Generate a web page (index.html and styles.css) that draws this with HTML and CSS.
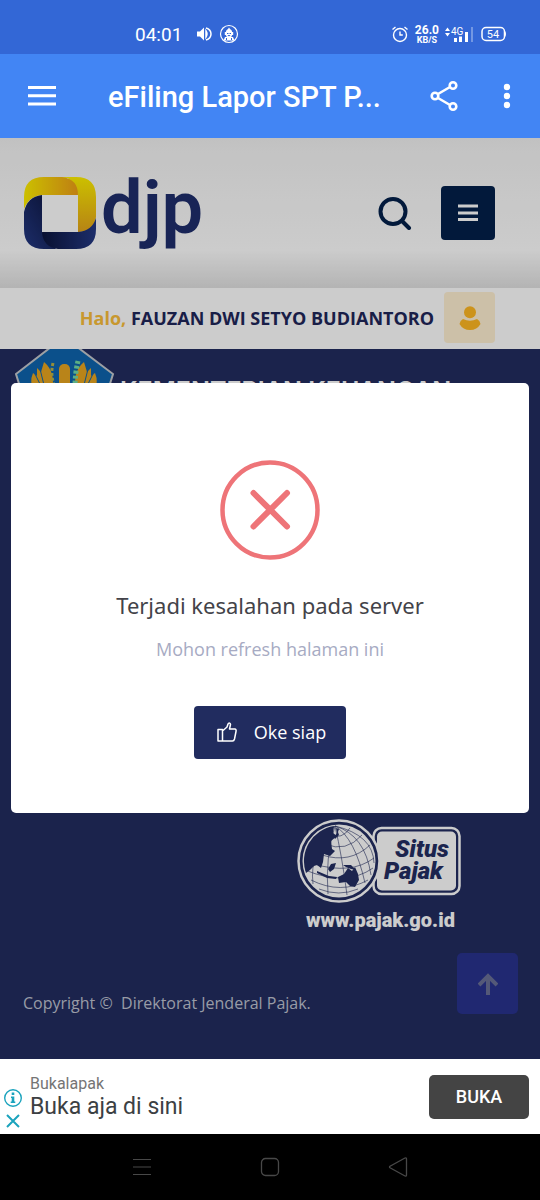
FILE: index.html
```html
<!DOCTYPE html>
<html lang="id">
<head>
    <meta charset="UTF-8">
    <meta name="viewport" content="width=device-width, initial-scale=1.0">
    <title>eFiling Lapor SPT Pajak</title>
    <link rel="stylesheet" href="styles.css">
</head>
<body>
    <!-- Status bar -->
    <div class="status-bar">
        <span class="clock">04:01</span>
        <svg class="sound-icon" width="16" height="16" viewBox="0 0 16 16">
            <path d="M1 5.500h3l4-4v13l-4-4H1z" fill="#fff"/>
            <path d="M10 5q2 3 0 6zM10 2q5 1.500 5 6t-5 6" fill="none" stroke="#fff" stroke-width="1.500"/>
        </svg>
        <svg width="20" height="20" viewBox="0 0 20 20">
            <circle cx="10" cy="10" r="8.500" fill="none" stroke="#fff" stroke-width="1.200"/>
            <path d="M10 3.500l1 1.500q2 .8 2.200 3h1v3h-1l-1 2H14l1.500 3.500h-11L6 13h1.800l-1-2h-1V8h1Q7 5.800 9 5z" fill="#fff"/>
            <path d="M8 9.500h1.500M10.500 9.500H12M8.800 11.600h2.400M7.500 14v2M12.500 14v2" stroke="#3367d6" stroke-width="1"/>
        </svg>
        <div class="status-right">
            <svg width="18" height="18" viewBox="0 0 18 18" fill="none" stroke="#fff" stroke-width="1.400">
                <circle cx="9" cy="10" r="6.500"/>
                <path d="M9 6.500V10h2.800M1.500 4.500l3-2.500M16.500 4.500l-3-2.500"/>
            </svg>
            <div class="net-speed"><b>26.0</b><small>KB/S</small></div>
            <svg width="30" height="18" viewBox="0 0 30 18">
                <path d="M0 6l2.500-3.500L5 6zM0 8l2.500 3.500L5 8z" fill="#fff"/>
                <text x="6" y="10" class="signal-text">4G</text>
                <path d="M9 13h3v4H9zM14 11.500h3V17h-3zM20 7h3v10h-3z" fill="#fff"/>
                <path d="M26 2h2v15h-2z" fill="#7397e3"/>
            </svg>
            <svg width="26" height="16" viewBox="0 0 26 16">
                <rect x="1" y="1.500" width="22.500" height="13" rx="4" fill="none" stroke="#fff" stroke-width="1.500"/>
                <path d="M24 5q2 3 0 6z" fill="#fff"/>
                <text x="12" y="12" text-anchor="middle" class="battery-text">54</text>
            </svg>
        </div>
    </div>

    <!-- App bar -->
    <header class="app-bar">
        <button class="icon-button" aria-label="Menu">
            <svg width="28" height="20" viewBox="0 0 28 20"><path d="M0 1.500h28M0 9.700h28M0 18h28" stroke="#fff" stroke-width="3"/></svg>
        </button>
        <h1>eFiling Lapor SPT P...</h1>
        <button class="icon-button" aria-label="Bagikan">
            <svg width="28" height="32" viewBox="0 0 28 32" fill="none" stroke="#fff" stroke-width="2.600">
                <path d="M8 14L20 7M8 18l12 7"/>
                <circle cx="5" cy="16" r="3.300"/><circle cx="23" cy="5.500" r="3.300"/><circle cx="23" cy="26.500" r="3.300"/>
            </svg>
        </button>
        <button class="icon-button" aria-label="Opsi lainnya">
            <svg width="8" height="26" viewBox="0 0 8 26" fill="#fff"><circle cx="4" cy="4" r="3.200"/><circle cx="4" cy="13" r="3.200"/><circle cx="4" cy="22" r="3.200"/></svg>
        </button>
    </header>

    <main class="page">
        <div class="site-header">
            <a class="logo" href="#">
                <svg width="72" height="72" viewBox="0 0 72 72">
                    <defs>
                        <linearGradient id="gold"><stop offset="0" stop-color="#fff000"/><stop offset="1" stop-color="#ef9f18"/></linearGradient>
                        <linearGradient id="goldSide" x2="0" y2="1"><stop offset="0" stop-color="#fff000"/><stop offset="1" stop-color="#e5a51a"/></linearGradient>
                        <linearGradient id="navy" x1="1" y1="0" x2="0" y2="1"><stop offset="0" stop-color="#0c153e"/><stop offset="1" stop-color="#243985"/></linearGradient>
                        <linearGradient id="navySide"><stop offset="0" stop-color="#0c153e"/><stop offset="1" stop-color="#243985"/></linearGradient>
                    </defs>
                    <path d="M18 0H52Q72 0 72 20V40Q70 55 54 55V18L44 1z" fill="url(#goldSide)"/>
                    <path d="M0 32V20Q0 0 20 0H38Q54 2 54 18H18Q5 19 0 32z" fill="url(#gold)"/>
                    <path d="M18 18V55l14 17H20Q0 72 0 52V35Q3 20 18 18z" fill="url(#navy)"/>
                    <path d="M18 55H54Q68 54 72 41V52Q72 72 52 72H34Q19 70 18 55z" fill="url(#navySide)"/>
                    <path d="M18 18H54V55H18z" fill="#fff"/>
                </svg>
                <span class="logo-text">djp</span>
            </a>
            <button class="search-button" aria-label="Cari">
                <svg width="34" height="34" viewBox="0 0 34 34" fill="none" stroke="#03204a" stroke-width="4" stroke-linecap="round"><circle cx="15" cy="15.500" r="12.500"/><path d="M24 25l7 7"/></svg>
            </button>
            <button class="menu-button" aria-label="Navigasi">
                <svg width="20" height="18" viewBox="0 0 20 18"><path d="M0 2h20M0 9h20M0 15.500h20" stroke="#fff" stroke-width="3"/></svg>
            </button>
        </div>

        <div class="greeting">
            <p><span class="halo">Halo,</span> FAUZAN DWI SETYO BUDIANTORO</p>
            <button class="avatar" aria-label="Profil">
                <svg width="22" height="24" viewBox="0 0 22 24" fill="#ffb822"><circle cx="11" cy="6.300" r="6"/><path d="M4 13q7 3.500 14 0 3 1.500 3.500 5Q18 24 11 24T.5 18Q1 14.500 4 13z"/></svg>
            </button>
        </div>

        <footer class="site-footer">
            <div class="ministry">
                <svg width="100" height="84" viewBox="0 0 100 84">
                    <path d="M1 25L49-12 98 25 80 83H19z" fill="#0e65ae" stroke="#c5c9ce" stroke-width="2"/>
                    <g fill="#e8a520">
                        <path d="M29 13q12 10 8 30H19q-5-10-1-19l4 3 0-8 4 4z"/>
                        <path d="M69 13q-12 10-8 30h18q5-10 1-19l-4 3 0-8-4 4z"/>
                        <rect x="44" y="15" width="11" height="34" rx="5"/>
                    </g>
                    <path d="M20 25l7 14M25 20l5 20M73 20l-5 20M78 25l-7 14" stroke="#0e65ae" stroke-width="1"/>
                    <path d="M38 14q-3 12 2 25" fill="none" stroke="#b9b247" stroke-width="3" stroke-dasharray="3 2"/>
                    <path d="M63 12q-3 12-3 27" fill="none" stroke="#73dba5" stroke-width="5" stroke-dasharray="3 2"/>
                </svg>
                <span class="ministry-name">KEMENTERIAN KEUANGAN</span>
            </div>

            <a class="pajak-link" href="#" aria-label="Situs Pajak">
                <svg width="166" height="114" viewBox="0 0 166 114">
                    <rect x="76.500" y="9" width="86" height="66" rx="8" fill="#232e62" stroke="#fff" stroke-width="2.500"/>
                    <rect x="80" y="12.500" width="79" height="59" rx="5" fill="#fff"/>
                    <circle cx="42" cy="42" r="40.500" fill="#232e62" stroke="#fff" stroke-width="2.500"/>
                    <circle cx="42" cy="42" r="35.500" fill="#fff" stroke="#fff" stroke-width="2"/>
                    <g fill="none" stroke="#232e62" stroke-width=".6">
                        <path d="M38 7Q58 19 68 64M38 7Q76 16 77 44M38 7Q45 37 50 76M38 7Q28 39 31 75M38 7Q12 33 16 65M38 7Q68 16 74 56"/>
                        <path d="M33 16Q45 21 53 9M28 25Q49 34 65 16M25 36Q53 45 73 26M17 45Q54 56 77 39M8 51Q49 68 76 49M14 61Q44 76 71 61M22 70Q42 78 61 70"/>
                    </g>
                    <g fill="#232e62">
                        <path d="M9 54A35.500 35.500 0 0 1 37 7l-1 7 4 3-6 5 1 8 3 2-5 5-6-2-1 8-2 6-4-3-3 1-4 4z"/>
                        <path d="M42 64l-1-6 6-3 4-6 4 3 3-4 3 7 1 6-4 7-5-1-4-4z"/>
                        <path d="M20 52l12 5 8 1-1 2-9-1-10-5zM34 45l5-1-2 6-4 3-2-3zM46 46l8 0 5 5-5-1-5-2zM39 9l3 1-1 3 1 3-4 4-1-2 3-4z"/>
                    </g>
                    <text x="98" y="38" class="pajak-title">Situs</text>
                    <text x="87" y="60" class="pajak-title">Pajak</text>
                    <text x="9" y="108" class="pajak-url">www.pajak.go.id</text>
                </svg>
            </a>

            <p class="copyright">Copyright ©&nbsp; Direktorat Jenderal Pajak.</p>
        </footer>

        <button class="scroll-top" aria-label="Ke atas">
            <svg width="20" height="22" viewBox="0 0 20 22" fill="none" stroke="#6a7096" stroke-width="4"><path d="M10 22V3M1 12l9-9 9 9"/></svg>
        </button>

        <!-- Error dialog -->
        <div class="overlay">
            <div class="dialog" role="dialog" aria-labelledby="dialog-title">
                <svg class="error-icon" width="100" height="100" viewBox="0 0 100 100" fill="none" stroke="#ee7478">
                    <circle cx="50" cy="50" r="47.500" stroke-width="4.500"/>
                    <path d="M33.500 33L67 66.500M67 33L33.500 66.500" stroke-width="6" stroke-linecap="round"/>
                </svg>
                <h2 id="dialog-title">Terjadi kesalahan pada server</h2>
                <p>Mohon refresh halaman ini</p>
                <button class="ok-button">
                    <svg width="20" height="20" viewBox="0 0 20 20" fill="none" stroke="#fff" stroke-width="1.500" stroke-linejoin="round">
                        <path d="M1 7.500h4.500V19H1zM5.500 9L10 5l1-3q2-2 2.500.5L12.500 7H18q1.500.5 1 2.500L17.500 17q-.5 2-2 2h-10"/>
                    </svg>
                    Oke siap
                </button>
            </div>
        </div>
    </main>

    <!-- Ad banner -->
    <aside class="ad">
        <div class="ad-choices">
            <svg width="20" height="20" viewBox="0 0 20 20"><circle cx="10" cy="10" r="8.300" fill="none" stroke="#1ba3bd" stroke-width="1.400"/><path d="M8.700 4.500h2.600v2.500H8.700zM8 8.500h3.300v5h1V15H7.700v-1.500h1V10H8z" fill="#1ba3bd"/></svg>
            <svg width="20" height="20" viewBox="0 0 20 20"><path d="M4 4l12 12M16 4L4 16" stroke="#1ba3bd" stroke-width="2"/></svg>
        </div>
        <div class="ad-text">
            <span class="ad-brand">Bukalapak</span>
            <span class="ad-title">Buka aja di sini</span>
        </div>
        <button class="ad-button">BUKA</button>
    </aside>

    <!-- System navigation -->
    <nav class="system-nav">
        <button class="icon-button" aria-label="Aplikasi terbaru"><svg width="20" height="20" viewBox="0 0 20 20"><path d="M1 2.500h18M1 10h18M1 17.500h18" stroke="#484848"/></svg></button>
        <button class="icon-button" aria-label="Beranda"><svg width="20" height="20" viewBox="0 0 20 20"><rect x="1.500" y="1.500" width="17" height="17" rx="4" fill="none" stroke="#484848" stroke-width="1.300"/></svg></button>
        <button class="icon-button" aria-label="Kembali"><svg width="20" height="20" viewBox="0 0 20 20"><path d="M17 1L2 9.200q-1 .8 0 1.600L17 19q1.500.5 1.500-1V2q0-1.500-1.500-1z" fill="none" stroke="#484848" stroke-width="1.300"/></svg></button>
    </nav>
</body>
</html>
```
FILE: styles.css
```css
* {
    box-sizing: border-box;
}

body {
    margin: 0;
    min-height: 100vh;
    display: flex;
    flex-direction: column;
    background-color: #000;
    font-family: "Open Sans", "Noto Sans", sans-serif;
}

h1, h2, p {
    margin: 0;
}

svg {
    display: block;
    flex-shrink: 0;
}

button {
    display: flex;
    align-items: center;
    justify-content: center;
    padding: 0;
    border: none;
    background: none;
    font-family: inherit;
    cursor: pointer;
}

/* Status bar */
.status-bar {
    display: flex;
    align-items: center;
    height: 54px;
    padding: 14px 33px 0 135px;
    background-color: #3367d6;
    color: #fff;
    font-family: Roboto, sans-serif;
}

.clock {
    font-size: 19px;
}

.sound-icon {
    margin: 0 7px 0 14px;
}

.status-right {
    display: flex;
    align-items: center;
    gap: 6px;
    margin-left: auto;
}

.net-speed {
    display: flex;
    flex-direction: column;
    align-items: center;
}

.net-speed b {
    font-size: 12px;
    line-height: 12px;
}

.net-speed small {
    font-size: 9px;
    font-weight: 700;
    line-height: 9px;
}

.signal-text {
    font-size: 10px;
    fill: #fff;
}

.battery-text {
    font-size: 11px;
    fill: #fff;
}

/* App bar */
.app-bar {
    display: flex;
    align-items: center;
    height: 84px;
    padding: 0 29px 0 28px;
    background-color: #4285f4;
    color: #fff;
}

.app-bar h1 {
    flex: 1;
    margin-left: 52px;
    padding-top: 2px;
    font-family: Roboto, sans-serif;
    font-size: 29px;
    font-weight: 500;
    white-space: nowrap;
}

.app-bar .icon-button + .icon-button {
    margin-left: 45px;
}

/* Web page */
.page {
    position: relative;
    flex: 1;
    display: flex;
    flex-direction: column;
}

.site-header {
    display: flex;
    align-items: center;
    height: 150px;
    padding: 0 45px 0 24px;
    background: linear-gradient(#f2f2f2, #f5f5f5 10%, #fff 75%, #e1e1e1);
}

.logo {
    display: flex;
    align-items: center;
    gap: 5px;
    margin-right: auto;
    text-decoration: none;
}

.logo-text {
    padding-bottom: 10px;
    color: #1f2e6c;
    font-family: Roboto, sans-serif;
    font-size: 74px;
    font-weight: 600;
    line-height: 72px;
}

.menu-button {
    width: 54px;
    height: 54px;
    margin-left: 29px;
    border-radius: 4px;
    background-color: #03204a;
}

.greeting {
    display: flex;
    align-items: center;
    justify-content: flex-end;
    gap: 10px;
    height: 61px;
    padding: 0 45px 2px;
    background-color: #fff;
}

.greeting p {
    color: #1e2659;
    font-size: 18px;
    font-weight: 700;
    white-space: nowrap;
}

.greeting .halo {
    color: #fabe3a;
}

.avatar {
    width: 51px;
    height: 51px;
    border-radius: 4px;
    background-color: #fff0d3;
}

.site-footer {
    flex: 1;
    display: flex;
    flex-direction: column;
    padding: 0 22px 44px 15px;
    background-color: #222c60;
}

.ministry {
    display: flex;
    align-items: flex-end;
    gap: 5px;
}

.ministry-name {
    color: #fff;
    font-family: Inter, sans-serif;
    font-size: 25px;
    font-weight: 600;
    line-height: 84px;
}

.pajak-link {
    align-self: flex-end;
    margin: auto 55px 58px 0;
}

.pajak-title {
    font-family: Roboto, sans-serif;
    font-size: 24px;
    font-style: italic;
    font-weight: 900;
    fill: #232e62;
}

.pajak-url {
    font-family: Roboto, sans-serif;
    font-size: 20px;
    font-weight: 900;
    fill: #fff;
}

.copyright {
    padding-left: 8px;
    color: #bfc2d0;
    font-size: 16px;
    line-height: 24px;
}

.scroll-top {
    position: absolute;
    right: 22px;
    bottom: 45px;
    width: 61px;
    height: 61px;
    border-radius: 5px;
    background-color: #28328e;
}

/* Dialog */
.overlay {
    position: absolute;
    inset: 0;
    display: flex;
    align-items: center;
    padding: 0 11px 2px;
    background-color: rgba(0, 0, 0, 0.2);
}

.dialog {
    flex: 1;
    display: flex;
    flex-direction: column;
    align-items: center;
    padding: 77px 20px 54px;
    border-radius: 5px;
    background-color: #fff;
    text-align: center;
}

.dialog h2 {
    margin: 30px 0 17px;
    color: #434349;
    font-family: "Noto Sans", sans-serif;
    font-size: 22px;
    font-weight: 400;
    line-height: 30px;
}

.dialog p {
    color: #a7abc3;
    font-size: 18px;
    line-height: 24px;
}

.ok-button {
    gap: 17px;
    height: 53px;
    margin-top: 45px;
    padding: 0 20px 0 23px;
    border-radius: 4px;
    background-color: #212c5f;
    color: #fff;
    font-size: 18px;
}

/* Ad banner */
.ad {
    display: flex;
    align-items: center;
    height: 75px;
    padding: 0 11px 0 3px;
    background-color: #fff;
    font-family: Roboto, sans-serif;
}

.ad-choices {
    display: flex;
    flex-direction: column;
    align-self: flex-end;
    gap: 3px;
    padding-bottom: 3px;
}

.ad-text {
    display: flex;
    flex-direction: column;
    flex: 1;
    margin-left: 7px;
}

.ad-brand {
    color: #757575;
    font-size: 16px;
    line-height: 20px;
}

.ad-title {
    color: #3c4043;
    font-size: 23px;
    line-height: 26px;
}

.ad-button {
    width: 100px;
    height: 44px;
    border-radius: 5px;
    background-color: #444;
    color: #fff;
    font-size: 18px;
    font-weight: 500;
}

/* System navigation */
.system-nav {
    display: flex;
    align-items: center;
    justify-content: center;
    gap: 108px;
    height: 66px;
    background-color: #000;
}
```
